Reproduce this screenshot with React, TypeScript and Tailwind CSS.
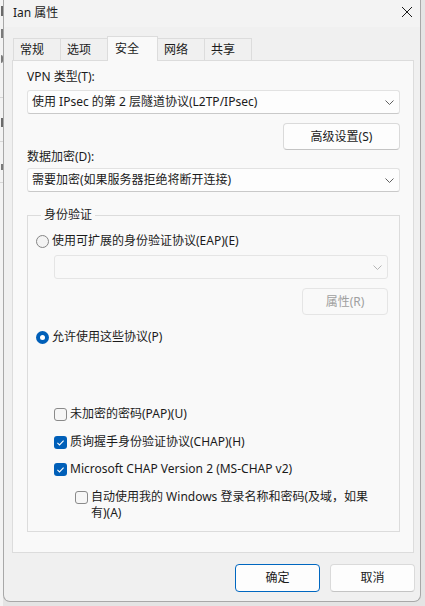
import React from "react";

const Chevron = ({ color = "#5f5f5f" }: { color?: string }) => (
  <svg width="9" height="5" viewBox="0 0 9 5" fill="none">
    <path d="M0.5 0.5L4.5 4.5L8.5 0.5" stroke={color} strokeWidth="1" />
  </svg>
);

const Select = ({
  value,
  disabled,
  className = "",
}: {
  value?: string;
  disabled?: boolean;
  className?: string;
}) => (
  <div
    className={`flex h-[24px] items-center justify-between rounded-[3px] border pl-[4px] pr-[5px] ${
      disabled
        ? "border-[#e5e5e5] bg-[#f9f9f9]"
        : "border-[#e2e2e2] border-b-[#c9c9c9] bg-[#fdfdfd]"
    } ${className}`}
  >
    <span className="text-[#1b1b1b]">{value}</span>
    <Chevron color={disabled ? "#b5b5b5" : "#5f5f5f"} />
  </div>
);

const Button = ({
  label,
  disabled,
  primary,
  className = "",
}: {
  label: string;
  disabled?: boolean;
  primary?: boolean;
  className?: string;
}) => (
  <div
    className={`flex items-center justify-center rounded-[4px] border ${
      disabled
        ? "border-[#e5e5e5] bg-[#f9f9f9] text-[#a0a0a0]"
        : primary
          ? "border-[#0067c0] bg-[#fdfdfd] text-[#1b1b1b]"
          : "border-[#dadada] border-b-[#c4c4c4] bg-[#fdfdfd] text-[#1b1b1b]"
    } ${className}`}
  >
    {label}
  </div>
);

const Radio = ({ checked }: { checked?: boolean }) =>
  checked ? (
    <div className="flex h-[13px] w-[13px] shrink-0 items-center justify-center rounded-full bg-[#005fb8]">
      <div className="h-[5px] w-[5px] rounded-full bg-white" />
    </div>
  ) : (
    <div className="h-[13px] w-[13px] shrink-0 rounded-full border border-[#858585] bg-[#f3f3f3]" />
  );

const Checkbox = ({ checked }: { checked?: boolean }) =>
  checked ? (
    <div className="flex h-[13px] w-[13px] shrink-0 items-center justify-center rounded-[3px] bg-[#005fb8]">
      <svg width="13" height="13" viewBox="0 0 13 13" fill="none">
        <path d="M3.4 6.9L5.5 8.9L9.6 4.6" stroke="white" strokeWidth="1.1" />
      </svg>
    </div>
  ) : (
    <div className="h-[13px] w-[13px] shrink-0 rounded-[3px] border border-[#8a8a8a] bg-[#f6f6f6]" />
  );

const tabs = ["常规", "选项", "安全", "网络", "共享"];

// slice of the window behind the dialog: only glyph edges show
const BehindStrip = () => (
  <div className="flex h-full w-[3px] shrink-0 flex-col overflow-hidden bg-[#f3f3f3]">
    <div className="ml-[1px] mt-[6px] h-[10px] w-[2px] bg-[#6a6a6a]" />
    <div className="ml-[1px] mt-[13px] h-[9px] w-[2px] bg-[#7a7a7a]" />
    <div className="ml-[1px] mt-[17px] h-[8px] w-[2px] rounded-r-full bg-[#7a7a7a]" />
    <div className="mt-[34px] h-px bg-[#d6d6d6]" />
    <div className="ml-[1px] mt-[20px] h-[9px] w-[2px] bg-[#6a6a6a]" />
    <div className="mt-[14px] h-px bg-[#d6d6d6]" />
    <div className="ml-[1px] mt-[22px] h-[6px] w-[2px] bg-[#7a7a7a]" />
    <div className="mt-[12px] h-px bg-[#d6d6d6]" />
  </div>
);

export default function App() {
  return (
    <div className="flex h-[606px] w-[425px] overflow-hidden bg-[#e4e4e4] font-['Noto_Sans','Noto_Sans_CJK_SC',sans-serif] text-[12px] leading-[16px] text-[#1b1b1b]">
      <BehindStrip />
      <div className="flex h-[602px] w-[418px] shrink-0 flex-col overflow-hidden rounded-b-[7px] border-x border-b border-[#a8a8a8] bg-[#f0f0f0]">
        {/* title bar */}
        <div className="flex h-[27px] shrink-0 items-center justify-between bg-[#f3f3f3] pl-[9px] pr-[7px]">
          <span className="mt-[-2px]">Ian 属性</span>
          <svg className="mt-[-3px]" width="12" height="12" viewBox="0 0 12 12" fill="none">
            <path d="M1 1L11 11M11 1L1 11" stroke="#1b1b1b" strokeWidth="1" />
          </svg>
        </div>

        {/* tabs */}
        <div className="relative z-10 mb-[-1px] ml-[9px] mt-[9px] flex h-[25px] items-end">
          {tabs.map((t, i) =>
            t === "安全" ? (
              <div
                key={t}
                className="ml-[-1px] flex h-[25px] w-[51px] items-center border-x border-t border-[#dcdcdc] bg-[#f9f9f9] pl-[7px]"
              >
                {t}
              </div>
            ) : (
              <div
                key={t}
                className={`mb-[1px] flex h-[22px] items-center border-x border-t border-[#dcdcdc] bg-[#f0f0f0] pl-[6px] ${
                  i === 0 ? "w-[48px]" : "ml-[-1px] w-[48px]"
                }`}
              >
                {t}
              </div>
            ),
          )}
        </div>

        {/* panel */}
        <div className="ml-[8px] flex h-[493px] w-[402px] flex-col border border-[#dcdcdc] bg-[#f9f9f9] pl-[14px] pr-[13px]">
          <div className="mt-[8px]">VPN 类型(T):</div>
          <Select className="mt-[5px]" value="使用 IPsec 的第 2 层隧道协议(L2TP/IPsec)" />
          <div className="mt-[9px] flex justify-end">
            <Button label="高级设置(S)" className="h-[27px] w-[117px]" />
          </div>
          <div className="mt-[-1px]">数据加密(D):</div>
          <Select className="mt-[3px]" value="需要加密(如果服务器拒绝将断开连接)" />

          <fieldset className="mt-[15px] flex flex-col border border-[#dcdcdc] pb-[10px] pl-[8px] pr-[11px]">
            <legend className="ml-[5px] px-[3px]">身份验证</legend>
            <div className="mt-[10px] flex items-center gap-[3px]">
              <Radio />
              <span>使用可扩展的身份验证协议(EAP)(E)</span>
            </div>
            <Select disabled className="ml-[18px] mt-[6px]" />
            <div className="mt-[9px] flex justify-end">
              <Button label="属性(R)" disabled className="h-[27px] w-[86px]" />
            </div>
            <div className="mt-[14px] flex items-center gap-[3px]">
              <Radio checked />
              <span>允许使用这些协议(P)</span>
            </div>

            <div className="ml-[18px] mt-[61px] flex items-center gap-[3px]">
              <Checkbox />
              <span>未加密的密码(PAP)(U)</span>
            </div>
            <div className="ml-[18px] mt-[12px] flex items-center gap-[3px]">
              <Checkbox checked />
              <span>质询握手身份验证协议(CHAP)(H)</span>
            </div>
            <div className="ml-[18px] mt-[11px] flex items-center gap-[3px]">
              <Checkbox checked />
              <span>Microsoft CHAP Version 2 (MS-CHAP v2)</span>
            </div>
            <div className="ml-[39px] mt-[12px] flex items-start gap-[3px]">
              <div className="mt-[2px]">
                <Checkbox />
              </div>
              <span>
                自动使用我的 Windows 登录名称和密码(及域，如果
                <br />
                有)(A)
              </span>
            </div>
          </fieldset>
        </div>

        {/* footer */}
        <div className="mt-[11px] flex gap-[10px] pl-[231px]">
          <Button label="确定" primary className="h-[28px] w-[85px]" />
          <Button label="取消" className="h-[28px] w-[85px]" />
        </div>
      </div>
    </div>
  );
}
